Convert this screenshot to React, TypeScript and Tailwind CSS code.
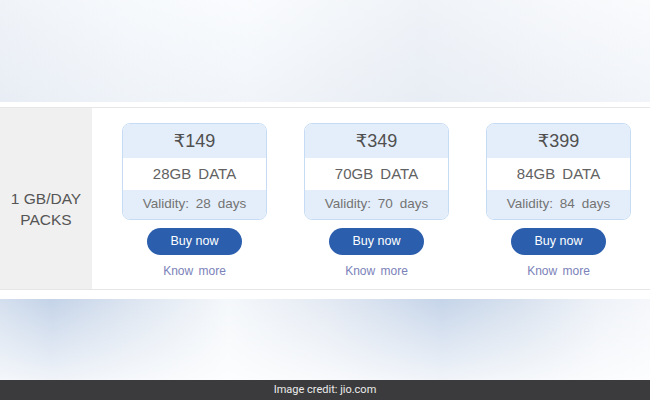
const PACKS = [
  { price: "149", data: "28GB", days: "28" },
  { price: "349", data: "70GB", days: "70" },
  { price: "399", data: "84GB", days: "84" },
];

function PackCard({ price, data, days }: { price: string; data: string; days: string }) {
  return (
    <div className="flex w-[145px] flex-col items-center">
      <div className="w-full overflow-hidden rounded-[8px] border border-[#c6dcf4] text-center">
        <div className="flex h-[34px] items-center justify-center bg-[#e4eefa] text-[18px] text-[#505050]">
          ₹{price}
        </div>
        <div className="flex h-[32px] items-center justify-center bg-white text-[15px] text-[#626262] [word-spacing:3px]">
          {data} DATA
        </div>
        <div className="flex h-[29px] items-center justify-center bg-[#e4eefa] text-[13.5px] text-[#737373] [word-spacing:3px]">
          Validity: {days} days
        </div>
      </div>
      <button className="mt-[8px] flex h-[27px] w-[95px] items-center justify-center rounded-full bg-[#2b5ead] text-[12.5px] text-white">
        Buy now
      </button>
      <div className="mt-[9px] text-[12px] leading-[14px] text-[#7b82b9] [word-spacing:2px]">Know more</div>
    </div>
  );
}

export default function App() {
  return (
    <div className="flex h-[400px] w-[650px] flex-col overflow-hidden bg-white font-['Liberation_Sans','DejaVu_Sans',sans-serif]">
      <div className="h-[102px] bg-[linear-gradient(to_bottom,rgba(255,255,255,0.3),rgba(230,236,244,0.35)),linear-gradient(to_right,#e9eef5_0%,#f3f7fb_20%,#f7fafd_38%,#eef2f7_55%,#e9eef5_65%,#f2f5f9_85%,#f7f9fc_100%)]" />
      <div className="h-[5px]" />
      <div className="flex h-[183px] border-y border-[#e6e6e6]">
        <div className="flex w-[92px] items-center justify-center bg-[#f0f0f0] pt-[20px] text-center text-[15.5px] leading-[21px] text-[#555]">
          1 GB/DAY
          <br />
          PACKS
        </div>
        <div className="flex flex-1 gap-[37px] pl-[30px] pt-[15px]">
          {PACKS.map((p) => (
            <PackCard key={p.price} {...p} />
          ))}
        </div>
      </div>
      <div className="h-[9px]" />
      <div className="h-[81px] bg-[linear-gradient(to_bottom,rgba(255,255,255,0),rgba(255,255,255,0.75)),linear-gradient(to_right,#d4dfee_0%,#c4d3e8_8%,#dbe4f0_20%,#f5f8fb_35%,#e4eaf3_50%,#c5d4e9_68%,#d7e1ee_80%,#eef2f8_92%,#f5f7fb_100%)]" />
      <div className="flex h-[20px] items-center justify-center bg-[#3b3b3d] font-['Roboto',sans-serif] text-[11px] text-[#ececec]">
        Image credit: jio.com
      </div>
    </div>
  );
}
